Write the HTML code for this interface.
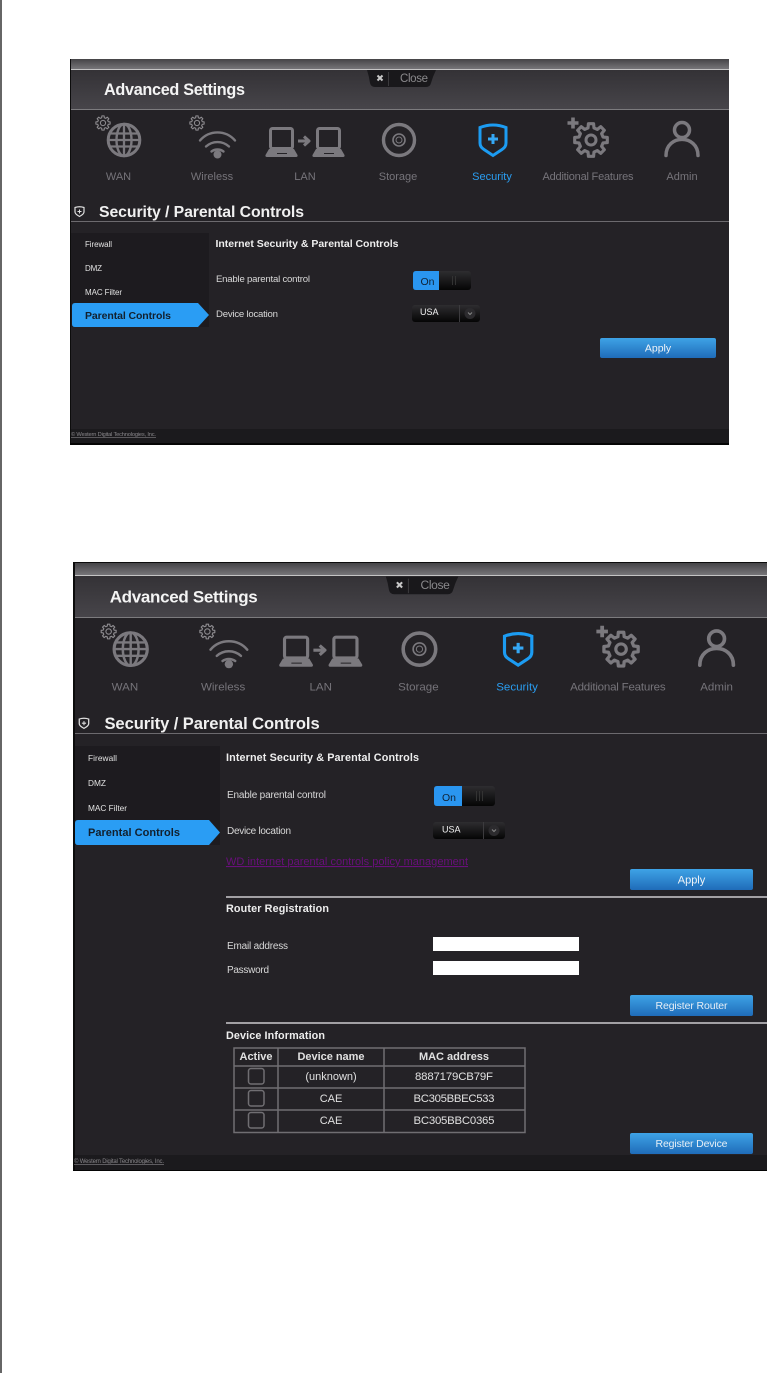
<!DOCTYPE html>
<html lang="en">
<head>
<meta charset="utf-8">
<title>Security / Parental Controls</title>
<style>
html,body{margin:0;padding:0;background:#fff;width:767px;height:1373px;overflow:hidden}
svg{display:block;font-family:"Liberation Sans",Arial,sans-serif;filter:blur(.3px)}
</style>
</head>
<body>
<svg width="767" height="1373" viewBox="0 0 767 1373" xmlns="http://www.w3.org/2000/svg">
<defs>
<linearGradient id="band" x1="0" y1="0" x2="0" y2="1"><stop offset="0" stop-color="#454447"/><stop offset="1" stop-color="#767579"/></linearGradient>
<linearGradient id="head" x1="0" y1="0" x2="0" y2="1"><stop offset="0" stop-color="#343236"/><stop offset="1" stop-color="#47454a"/></linearGradient>
<linearGradient id="btn" x1="0" y1="0" x2="0" y2="1"><stop offset="0" stop-color="#3ea3e6"/><stop offset="1" stop-color="#1f6cb9"/></linearGradient>
<linearGradient id="blk" x1="0" y1="0" x2="0" y2="1"><stop offset="0" stop-color="#2e2d30"/><stop offset="1" stop-color="#050505"/></linearGradient>
</defs>

<rect x="0" y="0" width="2" height="1373" fill="#666"/>

<!-- PANEL 1 -->
<rect x="70" y="59" width="659" height="386" fill="#242226"/>
<rect x="70" y="59" width="1" height="386" fill="#0c0c0c"/>
<rect x="71" y="59" width="658" height="10" fill="url(#band)"/>
<rect x="71" y="69" width="658" height="1" fill="#c4c4c4"/>
<rect x="71" y="70" width="658" height="39" fill="url(#head)"/>
<rect x="71" y="109" width="658" height="1" fill="#7c7b7e"/>
<rect x="71" y="221" width="658" height="1" fill="#6c6a6e"/>
<rect x="71" y="233" width="138" height="94" fill="#1d1b1f"/>
<rect x="71" y="429" width="658" height="14" fill="#1b1a1d"/>
<rect x="70" y="443" width="659" height="2" fill="#050505"/>

<!-- PANEL 2 -->
<rect x="73" y="562" width="694" height="609" fill="#242226"/>
<rect x="73" y="562" width="2" height="609" fill="#0c0c0c"/>
<rect x="73" y="562" width="694" height="1" fill="#0c0c0c"/>
<rect x="75" y="563" width="692" height="12" fill="url(#band)"/>
<rect x="75" y="575" width="692" height="1" fill="#c4c4c4"/>
<rect x="75" y="576" width="692" height="41" fill="url(#head)"/>
<rect x="75" y="617" width="692" height="1" fill="#7c7b7e"/>
<rect x="75" y="733" width="692" height="1" fill="#6c6a6e"/>
<rect x="75" y="746" width="145" height="99" fill="#1d1b1f"/>
<rect x="75" y="1155" width="692" height="15" fill="#1b1a1d"/>
<rect x="73" y="1170" width="694" height="1" fill="#050505"/>

<!-- HEADER CONTENT P1 -->
<g>
  <path d="M367 70H436Q433 76 431 83Q430 87 426 87H375Q371 87 370 83Q369 76 367 70Z" fill="#19181b"/>
  <rect x="388" y="72" width="1" height="14" fill="#3a393c"/>
  <path d="M377.500 75.500L382.500 80.500M382.500 75.500L377.500 80.500" stroke="#c8c8c8" stroke-width="2" fill="none"/>
  <text x="400" y="82" font-size="11.500" fill="#8a898c" textLength="28">Close</text>
  <text x="104" y="95" font-size="16.200" font-weight="bold" fill="#f4f4f4" textLength="141">Advanced Settings</text>

  <g fill="none" stroke="#7b797e" stroke-linejoin="round">
    <circle cx="124" cy="140" r="15.800" stroke-width="3"/>
    <ellipse cx="124" cy="140" rx="7.500" ry="16" stroke-width="2.400"/>
    <path d="M124 124V156M108 140H140M110.500 133.500H137.500M110.500 146.500H137.500" stroke-width="2.300"/>
    <path transform="translate(103 123) scale(.72)" stroke="#8e8c90" stroke-width="1.500" d="M7.280 -1.810L9.880 -1.560V1.560L7.280 1.810L6.430 3.860L8.090 5.880L5.880 8.090L3.860 6.430L1.810 7.280L1.560 9.880H-1.560L-1.810 7.280L-3.860 6.430L-5.880 8.090L-8.090 5.880L-6.430 3.860L-7.280 1.810L-9.880 1.560V-1.560L-7.280 -1.810L-6.430 -3.860L-8.090 -5.880L-5.880 -8.090L-3.860 -6.430L-1.810 -7.280L-1.560 -9.880H1.560L1.810 -7.280L3.860 -6.430L5.880 -8.090L8.090 -5.880L6.430 -3.860Z"/>
    <circle cx="103" cy="123" r="2.600" stroke="#8e8c90" stroke-width="1"/>
    <path transform="translate(197 123) scale(.72)" stroke="#8e8c90" stroke-width="1.500" d="M7.280 -1.810L9.880 -1.560V1.560L7.280 1.810L6.430 3.860L8.090 5.880L5.880 8.090L3.860 6.430L1.810 7.280L1.560 9.880H-1.560L-1.810 7.280L-3.860 6.430L-5.880 8.090L-8.090 5.880L-6.430 3.860L-7.280 1.810L-9.880 1.560V-1.560L-7.280 -1.810L-6.430 -3.860L-8.090 -5.880L-5.880 -8.090L-3.860 -6.430L-1.810 -7.280L-1.560 -9.880H1.560L1.810 -7.280L3.860 -6.430L5.880 -8.090L8.090 -5.880L6.430 -3.860Z"/>
    <circle cx="197" cy="123" r="2.600" stroke="#8e8c90" stroke-width="1"/>
    <path d="M200 140.500A23 23 0 0 1 235 140.500M206 146.500A17 17 0 0 1 229 146.500M211.500 151.500A10 10 0 0 1 223.500 151.500" stroke-width="2.400" stroke-linecap="round"/>
    <rect x="270.500" y="128.500" width="22" height="20" rx="2" stroke-width="3"/>
    <rect x="317.500" y="128.500" width="22" height="20" rx="2" stroke-width="3"/>
    <circle cx="399" cy="140" r="15.500" stroke-width="3.400"/>
    <circle cx="399" cy="140" r="6" stroke-width="1.600"/>
    <circle cx="399" cy="140" r="3" stroke-width="1"/>
    <path d="M308 141H298M304 136.500L309 141L304 145.500" stroke-width="3"/>
    <path transform="translate(591 140) scale(1.650)" stroke-width="1.900" d="M7.280 -1.810L9.880 -1.560V1.560L7.280 1.810L6.430 3.860L8.090 5.880L5.880 8.090L3.860 6.430L1.810 7.280L1.560 9.880H-1.560L-1.810 7.280L-3.860 6.430L-5.880 8.090L-8.090 5.880L-6.430 3.860L-7.280 1.810L-9.880 1.560V-1.560L-7.280 -1.810L-6.430 -3.860L-8.090 -5.880L-5.880 -8.090L-3.860 -6.430L-1.810 -7.280L-1.560 -9.880H1.560L1.810 -7.280L3.860 -6.430L5.880 -8.090L8.090 -5.880L6.430 -3.860Z"/>
    <circle cx="591" cy="140" r="5" stroke-width="3"/>
    <path d="M573 117.500V128.500M567.500 123H578.500" stroke-width="3.600"/>
    <circle cx="682" cy="130" r="7.500" stroke-width="3.500"/>
    <path d="M666 155.500C666 134 698 134 698 155.500" stroke-width="3.500" stroke-linecap="round"/>
  </g>
  <circle cx="217.500" cy="154.500" r="4" fill="#7b797e"/>
  <path d="M269 149H294L297.500 155Q298 157 296 157H267Q265 157 265.500 155Z M316 149H341L344.500 155Q345 157 343 157H314Q312 157 312.500 155Z" fill="#7b797e"/>
  <path d="M277 153.500H287M324 153.500H334" stroke="#242226" stroke-width="1"/>
  <path d="M480 127.500Q493 122.500 506 127.500V143Q506 147 502 149.500L493 155.500L484 149.500Q480 147 480 143Z" fill="none" stroke="#1c9cf2" stroke-width="3"/>
  <path d="M493 134V144M488 139H498" stroke="#35a8f5" stroke-width="3"/>

  <g font-size="11" fill="#76747a" text-anchor="middle">
    <text x="118.500" y="180">WAN</text>
    <text x="212" y="180">Wireless</text>
    <text x="305" y="180">LAN</text>
    <text x="398" y="180">Storage</text>
    <text x="492" y="180" fill="#2a9df0">Security</text>
    <text x="588" y="180" textLength="91">Additional Features</text>
    <text x="682" y="180">Admin</text>
  </g>

  <path d="M75 207.500Q79.500 206 84 207.500V212Q84 214 79.500 216.500Q75 214 75 212Z" fill="none" stroke="#e0e0e0" stroke-width="1.200"/>
  <path d="M79.500 209.500V213.500M77.500 211.500H81.500" stroke="#e0e0e0" stroke-width="1"/>
  <text x="99" y="217" font-size="15.800" font-weight="bold" fill="#f0f0f0" textLength="205">Security / Parental Controls</text>
</g>

<!-- HEADER CONTENT P2 -->
<g transform="matrix(1.05 0 0 1.036 .5 504.080)">
  <path d="M367 70H436Q433 76 431 83Q430 87 426 87H375Q371 87 370 83Q369 76 367 70Z" fill="#19181b"/>
  <rect x="388" y="72" width="1" height="14" fill="#3a393c"/>
  <path d="M377.500 75.500L382.500 80.500M382.500 75.500L377.500 80.500" stroke="#c8c8c8" stroke-width="2" fill="none"/>
  <text x="400" y="82" font-size="11.500" fill="#8a898c" textLength="28">Close</text>
  <text x="104" y="95" font-size="16.200" font-weight="bold" fill="#f4f4f4" textLength="141">Advanced Settings</text>

  <g fill="none" stroke="#7b797e" stroke-linejoin="round">
    <circle cx="124" cy="140" r="15.800" stroke-width="3"/>
    <ellipse cx="124" cy="140" rx="7.500" ry="16" stroke-width="2.400"/>
    <path d="M124 124V156M108 140H140M110.500 133.500H137.500M110.500 146.500H137.500" stroke-width="2.300"/>
    <path transform="translate(103 123) scale(.72)" stroke="#8e8c90" stroke-width="1.500" d="M7.280 -1.810L9.880 -1.560V1.560L7.280 1.810L6.430 3.860L8.090 5.880L5.880 8.090L3.860 6.430L1.810 7.280L1.560 9.880H-1.560L-1.810 7.280L-3.860 6.430L-5.880 8.090L-8.090 5.880L-6.430 3.860L-7.280 1.810L-9.880 1.560V-1.560L-7.280 -1.810L-6.430 -3.860L-8.090 -5.880L-5.880 -8.090L-3.860 -6.430L-1.810 -7.280L-1.560 -9.880H1.560L1.810 -7.280L3.860 -6.430L5.880 -8.090L8.090 -5.880L6.430 -3.860Z"/>
    <circle cx="103" cy="123" r="2.600" stroke="#8e8c90" stroke-width="1"/>
    <path transform="translate(197 123) scale(.72)" stroke="#8e8c90" stroke-width="1.500" d="M7.280 -1.810L9.880 -1.560V1.560L7.280 1.810L6.430 3.860L8.090 5.880L5.880 8.090L3.860 6.430L1.810 7.280L1.560 9.880H-1.560L-1.810 7.280L-3.860 6.430L-5.880 8.090L-8.090 5.880L-6.430 3.860L-7.280 1.810L-9.880 1.560V-1.560L-7.280 -1.810L-6.430 -3.860L-8.090 -5.880L-5.880 -8.090L-3.860 -6.430L-1.810 -7.280L-1.560 -9.880H1.560L1.810 -7.280L3.860 -6.430L5.880 -8.090L8.090 -5.880L6.430 -3.860Z"/>
    <circle cx="197" cy="123" r="2.600" stroke="#8e8c90" stroke-width="1"/>
    <path d="M200 140.500A23 23 0 0 1 235 140.500M206 146.500A17 17 0 0 1 229 146.500M211.500 151.500A10 10 0 0 1 223.500 151.500" stroke-width="2.400" stroke-linecap="round"/>
    <rect x="270.500" y="128.500" width="22" height="20" rx="2" stroke-width="3"/>
    <rect x="317.500" y="128.500" width="22" height="20" rx="2" stroke-width="3"/>
    <circle cx="399" cy="140" r="15.500" stroke-width="3.400"/>
    <circle cx="399" cy="140" r="6" stroke-width="1.600"/>
    <circle cx="399" cy="140" r="3" stroke-width="1"/>
    <path d="M308 141H298M304 136.500L309 141L304 145.500" stroke-width="3"/>
    <path transform="translate(591 140) scale(1.650)" stroke-width="1.900" d="M7.280 -1.810L9.880 -1.560V1.560L7.280 1.810L6.430 3.860L8.090 5.880L5.880 8.090L3.860 6.430L1.810 7.280L1.560 9.880H-1.560L-1.810 7.280L-3.860 6.430L-5.880 8.090L-8.090 5.880L-6.430 3.860L-7.280 1.810L-9.880 1.560V-1.560L-7.280 -1.810L-6.430 -3.860L-8.090 -5.880L-5.880 -8.090L-3.860 -6.430L-1.810 -7.280L-1.560 -9.880H1.560L1.810 -7.280L3.860 -6.430L5.880 -8.090L8.090 -5.880L6.430 -3.860Z"/>
    <circle cx="591" cy="140" r="5" stroke-width="3"/>
    <path d="M573 117.500V128.500M567.500 123H578.500" stroke-width="3.600"/>
    <circle cx="682" cy="130" r="7.500" stroke-width="3.500"/>
    <path d="M666 155.500C666 134 698 134 698 155.500" stroke-width="3.500" stroke-linecap="round"/>
  </g>
  <circle cx="217.500" cy="154.500" r="4" fill="#7b797e"/>
  <path d="M269 149H294L297.500 155Q298 157 296 157H267Q265 157 265.500 155Z M316 149H341L344.500 155Q345 157 343 157H314Q312 157 312.500 155Z" fill="#7b797e"/>
  <path d="M277 153.500H287M324 153.500H334" stroke="#242226" stroke-width="1"/>
  <path d="M480 127.500Q493 122.500 506 127.500V143Q506 147 502 149.500L493 155.500L484 149.500Q480 147 480 143Z" fill="none" stroke="#1c9cf2" stroke-width="3"/>
  <path d="M493 134V144M488 139H498" stroke="#35a8f5" stroke-width="3"/>

  <g font-size="11" fill="#76747a" text-anchor="middle">
    <text x="118.500" y="180">WAN</text>
    <text x="212" y="180">Wireless</text>
    <text x="305" y="180">LAN</text>
    <text x="398" y="180">Storage</text>
    <text x="492" y="180" fill="#2a9df0">Security</text>
    <text x="588" y="180" textLength="91">Additional Features</text>
    <text x="682" y="180">Admin</text>
  </g>

  <path d="M75 207.500Q79.500 206 84 207.500V212Q84 214 79.500 216.500Q75 214 75 212Z" fill="none" stroke="#e0e0e0" stroke-width="1.200"/>
  <path d="M79.500 209.500V213.500M77.500 211.500H81.500" stroke="#e0e0e0" stroke-width="1"/>
  <text x="99" y="217" font-size="15.800" font-weight="bold" fill="#f0f0f0" textLength="205">Security / Parental Controls</text>
</g>

<!-- P1 sidebar and form -->
<g font-size="8" fill="#e2e2e2">
  <text x="85" y="247" textLength="27">Firewall</text>
  <text x="85" y="271" textLength="17">DMZ</text>
  <text x="85" y="295" textLength="37">MAC Filter</text>
</g>
<path d="M75 303H198L209 315L198 327H75Q72 327 72 324V306Q72 303 75 303Z" fill="#2a9df4"/>
<text x="85" y="319" font-size="10.500" font-weight="bold" fill="#12202e" textLength="86">Parental Controls</text>
<text x="215.500" y="247" font-size="10.500" font-weight="bold" fill="#eee" textLength="183">Internet Security &amp; Parental Controls</text>
<text x="216" y="282" font-size="9.600" fill="#d8d8d8" textLength="94">Enable parental control</text>
<text x="216" y="317" font-size="9.600" fill="#d8d8d8" textLength="62">Device location</text>

<rect x="413" y="271" width="58" height="19" rx="3" fill="url(#blk)"/>
<path d="M416 271H439V290H416Q413 290 413 287V274Q413 271 416 271Z" fill="#2a96f0"/>
<path d="M452.500 276V285M455.500 276V285" stroke="#333" stroke-width="1"/>
<text x="427.500" y="285" font-size="10.500" fill="#0f2235" text-anchor="middle">On</text>

<rect x="412" y="305" width="68" height="17" rx="3" fill="url(#blk)"/>
<rect x="459" y="305" width="1" height="17" fill="#3c3b3e"/>
<circle cx="470" cy="313.500" r="5.500" fill="#2c2b2e"/>
<path d="M468 312.500L470 314.500L472 312.500" fill="none" stroke="#888" stroke-width="1"/>
<text x="420" y="315" font-size="9" fill="#f2f2f2">USA</text>

<rect x="600" y="338" width="116" height="20" rx="2" fill="url(#btn)"/>
<text x="658" y="351.500" font-size="10.500" fill="#f0f4f8" text-anchor="middle">Apply</text>

<text x="71" y="436" font-size="5.700" fill="#8a888c" textLength="85" text-decoration="underline">© Western Digital Technologies, Inc.</text>

<!-- P2 sidebar and form -->
<g font-size="8.300" fill="#e2e2e2">
  <text x="88" y="761" textLength="29">Firewall</text>
  <text x="88" y="786" textLength="18">DMZ</text>
  <text x="88" y="811" textLength="39">MAC Filter</text>
</g>
<path d="M78 820H209L220 832.500L209 845H78Q75 845 75 842V823Q75 820 78 820Z" fill="#2a9df4"/>
<text x="88" y="836" font-size="11" font-weight="bold" fill="#12202e" textLength="92">Parental Controls</text>
<text x="226" y="761" font-size="10.800" font-weight="bold" fill="#eee" textLength="193">Internet Security &amp; Parental Controls</text>
<text x="227" y="798" font-size="10" fill="#d8d8d8" textLength="99">Enable parental control</text>
<text x="227" y="834" font-size="10" fill="#d8d8d8" textLength="64">Device location</text>
<text x="226" y="865" font-size="11" fill="#6a0f7c" textLength="242" text-decoration="underline">WD internet parental controls policy management</text>

<rect x="434" y="786" width="61" height="20" rx="3" fill="url(#blk)"/>
<path d="M437 786H462V806H437Q434 806 434 803V789Q434 786 437 786Z" fill="#2a96f0"/>
<path d="M476.500 791V801M479.500 791V801M482.500 791V801" stroke="#333" stroke-width="1"/>
<text x="449" y="801" font-size="10.500" fill="#0f2235" text-anchor="middle">On</text>

<rect x="433" y="822" width="72" height="17" rx="3" fill="url(#blk)"/>
<rect x="483" y="822" width="1" height="17" fill="#3c3b3e"/>
<circle cx="494" cy="830.500" r="5.500" fill="#2c2b2e"/>
<path d="M492 829.500L494 831.500L496 829.500" fill="none" stroke="#888" stroke-width="1"/>
<text x="442" y="832.500" font-size="9" fill="#f2f2f2">USA</text>

<rect x="630" y="869" width="123" height="21" rx="2" fill="url(#btn)"/>
<text x="691.500" y="883.500" font-size="11" fill="#f0f4f8" text-anchor="middle">Apply</text>

<rect x="226" y="896" width="541" height="2" fill="#a2a0a4"/>
<text x="226" y="912" font-size="10.800" font-weight="bold" fill="#eee" textLength="103">Router Registration</text>
<text x="227" y="949" font-size="10" fill="#d8d8d8" textLength="61">Email address</text>
<text x="227" y="973" font-size="10" fill="#d8d8d8" textLength="42">Password</text>
<rect x="433" y="937" width="146" height="14" fill="#fff"/>
<rect x="433" y="961" width="146" height="14" fill="#fff"/>
<rect x="630" y="995" width="123" height="21" rx="2" fill="url(#btn)"/>
<text x="691.500" y="1009" font-size="10.500" fill="#e6eef6" text-anchor="middle" textLength="72">Register Router</text>

<rect x="226" y="1022" width="541" height="2" fill="#a2a0a4"/>
<text x="226" y="1039" font-size="10.800" font-weight="bold" fill="#eee" textLength="99">Device Information</text>

<g fill="none" stroke="#706e72" stroke-width="1.500">
  <rect x="234" y="1048" width="291" height="84.500"/>
  <path d="M278 1048V1132.500M384 1048V1132.500M234 1066H525M234 1088H525M234 1110H525"/>
  <rect x="248.500" y="1068.500" width="15.500" height="15.500" rx="2.500"/>
  <rect x="248.500" y="1090.500" width="15.500" height="15.500" rx="2.500"/>
  <rect x="248.500" y="1112.500" width="15.500" height="15.500" rx="2.500"/>
</g>
<g font-size="11" fill="#e0e0e0" text-anchor="middle">
  <text x="256" y="1060" font-weight="bold" textLength="33">Active</text>
  <text x="331" y="1060" font-weight="bold" textLength="67">Device name</text>
  <text x="454" y="1060" font-weight="bold" textLength="70">MAC address</text>
  <text x="331" y="1080">(unknown)</text>
  <text x="454" y="1080" font-size="11.400" textLength="78">8887179CB79F</text>
  <text x="331" y="1102">CAE</text>
  <text x="454" y="1102" font-size="11.400" textLength="81">BC305BBEC533</text>
  <text x="331" y="1124">CAE</text>
  <text x="454" y="1124" font-size="11.400" textLength="81">BC305BBC0365</text>
</g>

<rect x="630" y="1133" width="123" height="21" rx="2" fill="url(#btn)"/>
<text x="691.500" y="1147" font-size="10.500" fill="#e6eef6" text-anchor="middle" textLength="72">Register Device</text>

<text x="74" y="1163" font-size="6" fill="#8a888c" textLength="90" text-decoration="underline">© Western Digital Technologies, Inc.</text>
</svg>
</body>
</html>
